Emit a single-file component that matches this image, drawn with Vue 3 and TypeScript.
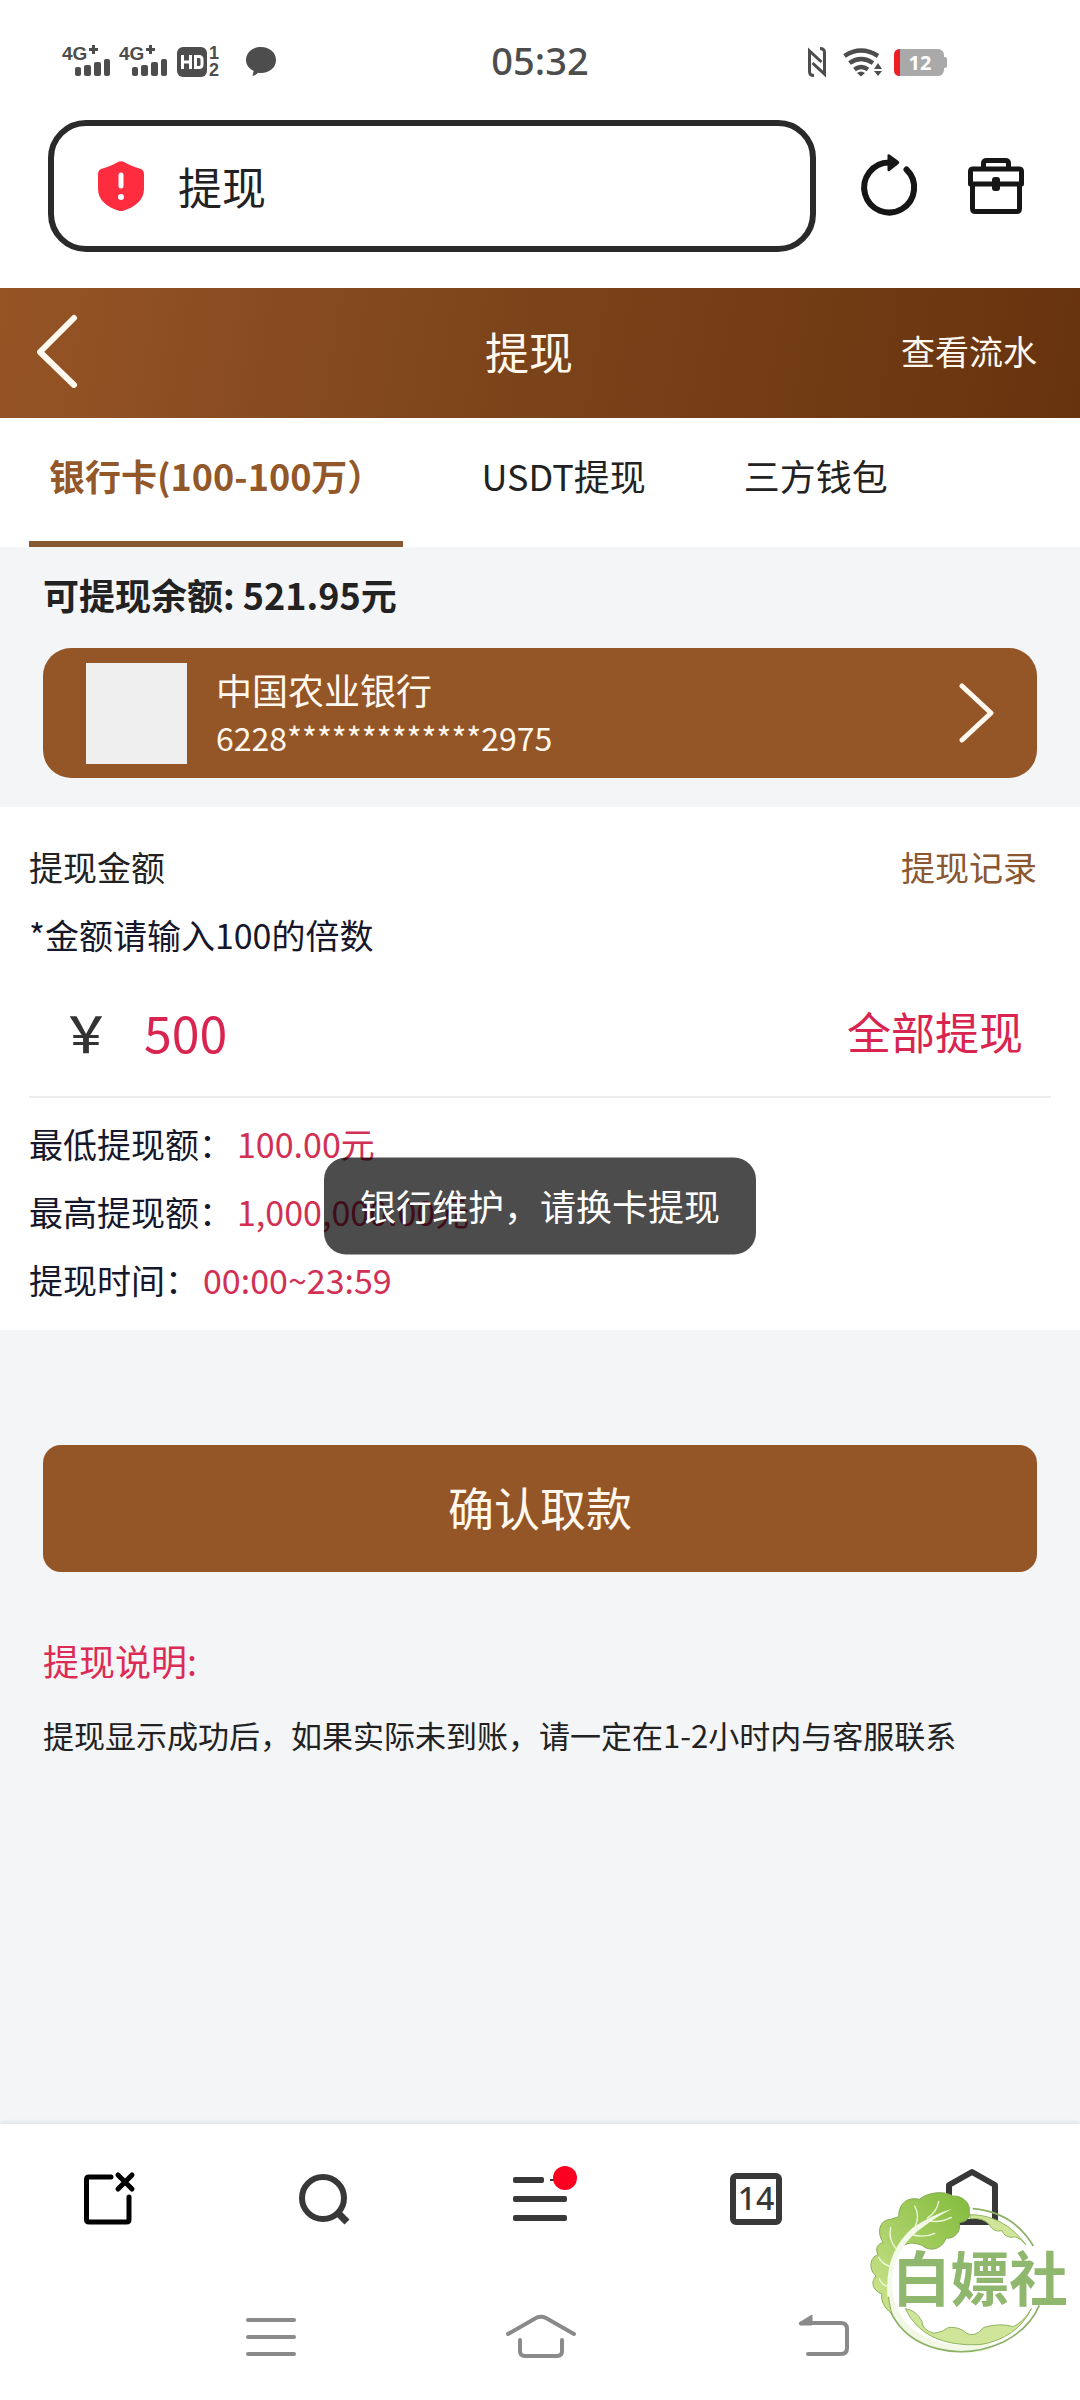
<script setup lang="ts">
import { ref } from 'vue'

interface Tab {
  id: string
  label: string
}

interface Limit {
  label: string
  value: string
}

const tabs: Tab[] = [
  { id: 'bank', label: '银行卡(100-100万）' },
  { id: 'usdt', label: 'USDT提现' },
  { id: 'wallet', label: '三方钱包' },
]

const limits: Limit[] = [
  { label: '最低提现额：', value: '100.00元' },
  { label: '最高提现额：', value: '1,000,000.00元' },
  { label: '提现时间：', value: '00:00~23:59' },
]

const activeTab = ref('bank')
const address = ref('提现')
const amount = ref('500')
const toast = ref('银行维护，请换卡提现')
</script>

<template>
  <div class="phone">
    <header class="status">
      <svg class="status-left" width="220" height="40" viewBox="60 40 220 40" aria-hidden="true">
        <g v-for="dx in [0, 57]" :key="dx" :transform="`translate(${dx} 0)`">
          <text x="62" y="60" class="net">4G</text>
          <path d="M89 49.500h9M93.500 45v9" stroke="#4d4d4d" stroke-width="3" />
          <rect x="75" y="67" width="6" height="9" rx="2" />
          <rect x="84" y="65" width="7" height="11" rx="2" />
          <rect x="94" y="62" width="7" height="14" rx="2" />
          <rect x="104" y="59" width="6" height="17" rx="2" />
        </g>
        <rect x="177" y="47" width="30" height="30" rx="6" />
        <path d="M182.500 55v14M190.500 55v14M182.500 62h8M195.500 56.500h3.500q3 0 3 3v5q0 3-3 3h-3.500z" fill="none" stroke="#fff" stroke-width="3" />
        <text x="209" y="59" class="sim">1</text>
        <text x="209" y="76" class="sim">2</text>
        <path d="M261 47c8.500 0 15 5.500 15 13s-6.500 13-15 13c-1 0-2 0-3-.3-1.500 1.500-3 2.600-4.700 3-.6.100-.9-.4-.6-1l1-3.700c-4.600-2.300-7.700-6.200-7.700-11 0-7.500 6.500-13 15-13z" />
      </svg>
      <time class="clock">05:32</time>
      <svg class="status-right" width="150" height="40" viewBox="800 40 150 40" aria-hidden="true">
        <path d="M814 75.500q-4.500 0-4.500-4V51l12 11M820 48.500q4.500 0 4.500 4V74l-12-11" fill="none" stroke="#4d4d4d" stroke-width="3" />
        <g fill="none" stroke="#4d4d4d" stroke-width="4.500">
          <path d="M844.500 56q16.500-11 33.500 0" />
          <path d="M849.500 63q11.500-8 23.500 0" />
          <path d="M854.500 69.500q6.500-5 13.500 0" />
        </g>
        <path d="M857 73q4-3 8 0l-4 3.500zM878 63l4 6h-8zM878 76l4-5h-8z" />
        <rect x="894" y="49" width="50" height="27" rx="6" fill="#a9a9a9" />
        <path d="M944 57h1q2 0 2 2v7q0 2-2 2h-1z" fill="#a9a9a9" />
        <path d="M900 49v27q-6 0-6-6V55q0-6 6-6z" fill="#ed1f24" />
        <text x="920" y="70" class="battery">12</text>
      </svg>
    </header>

    <form class="browser" @submit.prevent>
      <div class="address">
        <svg width="46" height="50" viewBox="0 0 46 50" aria-hidden="true">
          <path d="M20 1q3-1.500 6 0c5 3 10 5 15.500 6.500 3 1 4.500 2.500 4.500 5.500v15c0 11-9 18-20 21.500q-3 1-6 0C9 46 0 39 0 28V13c0-3 1.500-4.500 4.500-5.500C10 6 15 4 20 1z" fill="#fe2c3f" />
          <path d="M23 14v11" stroke="#fff" stroke-width="5" stroke-linecap="round" />
          <circle cx="23" cy="36" r="3" fill="#fff" />
        </svg>
        <input v-model="address" class="address-input" type="text" aria-label="网址" />
      </div>
      <button class="icon" type="button" aria-label="刷新">
        <svg class="spill" width="56" height="62" viewBox="0 0 56 62">
          <path d="M46.500 14.500A25 25 0 1 1 29 7.500" fill="none" stroke="#161616" stroke-width="6" stroke-linecap="round" />
          <path d="M27.500 0.500q0-2 2-1l9 6.500q1.500 1.500 0 3l-9 7q-2 1-2-1z" fill="#161616" />
        </svg>
      </button>
      <button class="icon" type="button" aria-label="工具箱">
        <svg width="56" height="58" viewBox="0 0 56 58">
          <g fill="none" stroke="#161616" stroke-width="5" stroke-linejoin="round">
            <path d="M15.500 12V6.500q0-3 3-3h19q3 0 3 3V12" />
            <path d="M2.500 27V14.500q0-2.500 2.500-2.500h46q2.500 0 2.500 2.500V27z" />
            <path d="M4.500 28v23.500q0 3 3 3h41q3 0 3-3V28" />
          </g>
          <rect x="24" y="20" width="8" height="14" rx="3" fill="#161616" />
        </svg>
      </button>
    </form>

    <div class="view">
      <nav class="titlebar">
        <button class="back" type="button" aria-label="返回">
          <svg width="42" height="74" viewBox="0 0 42 74">
            <path d="M37 4L3 38l34 33" fill="none" stroke="#fff8ee" stroke-width="6" stroke-linecap="round" stroke-linejoin="round" />
          </svg>
        </button>
        <h1>提现</h1>
        <a class="flow" href="#flow">查看流水</a>
      </nav>

      <div class="tabs" role="tablist">
        <button
          v-for="tab in tabs"
          :key="tab.id"
          type="button"
          role="tab"
          class="tab"
          :class="{ active: tab.id === activeTab }"
          :aria-selected="tab.id === activeTab"
          @click="activeTab = tab.id"
        >{{ tab.label }}</button>
      </div>

      <section class="account">
        <p class="balance">可提现余额: 521.95元</p>
        <button class="card" type="button">
          <span class="logo"></span>
          <span class="card-text">
            <span class="bank">中国农业银行</span>
            <span class="number">6228*************2975</span>
          </span>
          <svg width="36" height="60" viewBox="0 0 36 60" aria-hidden="true">
            <path d="M4 3l29 27L4 57" fill="none" stroke="#fff8ee" stroke-width="5" stroke-linecap="round" stroke-linejoin="round" />
          </svg>
        </button>
      </section>

      <section class="withdraw">
        <div class="line">
          <label for="amount">提现金额</label>
          <a class="records" href="#records">提现记录</a>
        </div>
        <p class="hint">*金额请输入100的倍数</p>
        <div class="amount">
          <span class="yen">￥</span>
          <input id="amount" v-model="amount" type="text" inputmode="numeric" />
          <button class="all" type="button">全部提现</button>
        </div>
        <dl class="limits">
          <div v-for="item in limits" :key="item.label" class="limit">
            <dt>{{ item.label }}</dt>
            <dd>{{ item.value }}</dd>
          </div>
        </dl>
      </section>

      <section class="confirm">
        <button class="submit" type="button">确认取款</button>
        <h2>提现说明:</h2>
        <p class="note">提现显示成功后，如果实际未到账，请一定在1-2小时内与客服联系</p>
      </section>

      <div v-if="toast" class="toast" role="status">{{ toast }}</div>
    </div>

    <footer class="bottom">
      <div class="toolbar">
        <button class="icon" type="button" aria-label="关闭页面">
          <svg width="60" height="60" viewBox="0 0 60 60">
            <path d="M33 9H11q-2.500 0-2.500 2.500v40q0 2.500 2.500 2.500h37.500q2.500 0 2.500-2.500V29M40 7l14 14M54 7L40 21" fill="none" stroke="#000" stroke-width="5" stroke-linecap="round" />
          </svg>
        </button>
        <button class="icon" type="button" aria-label="搜索">
          <svg width="60" height="60" viewBox="0 0 60 60">
            <circle cx="29" cy="30" r="21" fill="none" stroke="#383838" stroke-width="6" />
            <path d="M43 44l10 10" stroke="#383838" stroke-width="7" />
          </svg>
        </button>
        <button class="icon" type="button" aria-label="菜单">
          <svg class="spill" width="60" height="60" viewBox="0 0 60 60">
            <g fill="#383838">
              <rect x="3" y="9" width="31" height="6" rx="2" />
              <rect x="40" y="11" width="6" height="2" />
              <rect x="3" y="28" width="54" height="6" rx="2" />
              <rect x="3" y="47" width="54" height="6" rx="2" />
            </g>
            <circle cx="55" cy="10" r="12" fill="#fb0021" />
          </svg>
        </button>
        <button class="icon" type="button" aria-label="标签页">
          <svg width="60" height="60" viewBox="0 0 60 60">
            <rect x="7" y="8" width="46" height="46" rx="3" fill="none" stroke="#383838" stroke-width="6" />
            <text x="30" y="42" class="count">14</text>
          </svg>
        </button>
        <button class="icon" type="button" aria-label="主页">
          <svg width="60" height="60" viewBox="0 0 60 60">
            <path d="M30 4L7 17v37h46V17z" fill="none" stroke="#383838" stroke-width="6" stroke-linejoin="round" />
          </svg>
        </button>
      </div>

      <div class="system">
        <button class="icon" type="button" aria-label="最近任务">
          <svg width="80" height="60" viewBox="0 0 80 60">
            <path d="M18 14h46M18 31h46M18 48h46" stroke="#8a8a8a" stroke-width="4" stroke-linecap="round" />
          </svg>
        </button>
        <button class="icon" type="button" aria-label="桌面">
          <svg width="80" height="60" viewBox="0 0 80 60">
            <path d="M8 28l28-16q5-2.500 10 0l28 16M20 34v11q0 5 5 5h32q5 0 5-5V34" fill="none" stroke="#8a8a8a" stroke-width="4" stroke-linecap="round" />
          </svg>
        </button>
        <button class="icon" type="button" aria-label="后退">
          <svg width="80" height="60" viewBox="0 0 80 60">
            <path d="M32 17h39q6 0 6 6v19q0 6-6 6H38" fill="none" stroke="#8a8a8a" stroke-width="4" stroke-linecap="round" />
            <path d="M29 17l13-8v10H30z" fill="#8a8a8a" stroke="#8a8a8a" stroke-width="1" />
          </svg>
        </button>
      </div>

      <svg class="stamp" width="230" height="240" viewBox="0 0 690 720" role="img" aria-label="白嫖社">
        <defs>
          <linearGradient id="leaf" x1="1" y1="0" x2="0" y2="1">
            <stop offset="0" stop-color="#82bb3c" />
            <stop offset="0.550" stop-color="#a9d066" />
            <stop offset="1" stop-color="#d3e893" />
          </linearGradient>
        </defs>
        <path d="M130 320C90 440 120 560 230 606Q320 642 420 618" fill="none" stroke="#f3f8e6" stroke-width="24" />
        <path d="M126 522C100 500 92 480 96 462C66 450 62 425 78 408C56 390 58 352 84 344C74 325 84 310 100 308C80 280 86 240 122 238L146 230C146 190 172 170 208 178C230 158 282 150 308 168C335 166 362 188 358 214C362 236 346 246 328 248C334 276 312 298 288 294C276 330 238 336 216 316C180 302 158 310 138 340C108 390 108 460 126 522z" fill="url(#leaf)" stroke="#86ac55" stroke-width="3" />
        <path d="M112 470C106 380 132 310 190 262Q245 225 306 206Q230 246 184 290C142 334 122 390 122 470z" fill="#f4faea" />
        <g fill="none" stroke="#eff8dc" stroke-width="4" stroke-linecap="round">
          <path d="M196 258Q210 226 194 198M232 234Q262 214 266 184M230 242Q270 250 304 232M180 282Q220 296 254 280M140 328Q114 300 122 262M122 380Q96 372 86 352M114 440Q92 432 88 416" />
        </g>
        <path d="M360 224Q460 224 528 314Q500 284 484 292Q462 290 456 272Q430 278 418 254Q400 232 360 236z" fill="#cfe59a" stroke="#91b65e" stroke-width="3" />
        <path d="M166 506Q198 510 216 544Q214 568 252 580Q280 576 296 562Q330 560 350 580Q374 594 402 562Q450 548 490 560Q520 546 544 506Q500 596 390 614Q220 622 166 506z" fill="#cfe59a" stroke="#91b65e" stroke-width="3" />
        <path d="M368 206Q490 216 550 318M124 520C180 630 330 666 460 606Q538 566 568 496" fill="none" stroke="#8ab165" stroke-width="5" />
        <text x="390" y="484" class="stamp-text">白嫖社</text>
      </svg>
    </footer>
  </div>
</template>

<style>
html,
body {
  margin: 0;
  background: #fff;
}
</style>

<style scoped>
.phone {
  display: flex;
  flex-direction: column;
  min-height: 100vh;
  background: #fff;
  color: #222;
  font-family: "Noto Sans CJK SC", "Noto Sans", sans-serif;
}

button,
input {
  margin: 0;
  padding: 0;
  border: 0;
  border-radius: 0;
  background: none;
  color: inherit;
  font: inherit;
  outline: none;
}

button {
  cursor: pointer;
}

a {
  color: inherit;
  text-decoration: none;
}

h1,
h2,
p,
dl,
dd {
  margin: 0;
  font-weight: 400;
}

svg {
  display: block;
  flex: none;
}

/* status bar */
.status {
  display: grid;
  grid-template-columns: 1fr auto 1fr;
  align-items: center;
  height: 120px;
  fill: #4d4d4d;
}

.status-left {
  margin-left: 60px;
}

.status-right {
  justify-self: end;
  margin-right: 130px;
}

.clock {
  color: #4d4d4d;
  font-family: "Noto Sans", sans-serif;
  font-size: 38px;
  font-weight: 500;
  line-height: 40px;
}

.net {
  font: 700 19px "Liberation Sans", sans-serif;
}

.sim {
  font: 700 18px "Liberation Sans", sans-serif;
}

.battery {
  fill: #fff;
  font: 700 20px "Noto Sans", sans-serif;
  text-anchor: middle;
}

/* browser address row */
.browser {
  display: flex;
  align-items: center;
  gap: 52px;
  padding: 0 56px 36px 48px;
}

.address {
  display: flex;
  flex: 1;
  align-items: center;
  gap: 34px;
  box-sizing: border-box;
  height: 132px;
  min-width: 0;
  margin-right: -8px;
  padding: 0 44px;
  border: 6px solid #2a2a2a;
  border-radius: 38px;
}

.address-input {
  flex: 1;
  min-width: 0;
  height: 64px;
  font-size: 44px;
}

.icon {
  display: flex;
  align-items: center;
  justify-content: center;
}

/* page */
.view {
  position: relative;
  flex: 1;
  background: #f3f5f7;
}

.titlebar {
  display: flex;
  align-items: center;
  justify-content: space-between;
  height: 126px;
  padding: 0 43px 4px 37px;
  background: linear-gradient(100deg, #965425, #7b431a 50%, #67330e);
  color: #fff8ee;
}

.back {
  width: 120px;
}

.titlebar h1 {
  font-size: 44px;
  line-height: 64px;
}

.flow {
  font-size: 34px;
  line-height: 48px;
}

.tabs {
  display: flex;
  gap: 58px;
  padding: 0 29px;
  background: #fff;
}

.tab {
  height: 129px;
  padding: 0 20px 10px;
  border-bottom: 6px solid transparent;
  font-size: 36px;
  line-height: 48px;
  white-space: nowrap;
}

.tab.active {
  border-bottom-color: #875932;
  color: #925829;
  font-weight: 700;
}

.account {
  padding: 0 43px 29px;
}

.balance {
  margin-bottom: 6px;
  font-size: 36px;
  font-weight: 700;
  line-height: 95px;
}

.card {
  display: flex;
  align-items: center;
  gap: 29px;
  width: 100%;
  height: 130px;
  padding: 0 43px;
  border-radius: 28px;
  background: #945527;
  color: #fff8ee;
  text-align: left;
}

.logo {
  width: 101px;
  height: 101px;
  background: #efefef;
}

.card-text {
  display: flex;
  flex: 1;
  flex-direction: column;
  line-height: 48px;
}

.bank {
  font-size: 36px;
}

.number {
  font-size: 32px;
}

.withdraw {
  padding: 26px 29px 16px;
  background: #fff;
  font-size: 34px;
  line-height: 68px;
}

.line {
  display: flex;
  justify-content: space-between;
  padding-right: 14px;
}

.records {
  color: #8a5730;
}

.hint,
.limits {
  color: #17172b;
}

.amount {
  display: flex;
  align-items: center;
  height: 124px;
  padding: 0 28px 3px 32px;
  border-bottom: 2px solid #ededed;
  color: #d92450;
}

.yen {
  width: 83px;
  color: #333;
  font-size: 50px;
  font-weight: 500;
}

.amount input {
  flex: 1;
  min-width: 0;
  height: 72px;
  font-size: 50px;
}

.all {
  font-size: 44px;
}

.limits {
  padding-top: 12px;
}

.limit {
  display: flex;
  gap: 4px;
}

.limit dd {
  color: #d22f54;
}

.confirm {
  padding: 115px 43px 0;
}

.submit {
  width: 100%;
  height: 127px;
  padding-bottom: 6px;
  border-radius: 18px;
  background: #945527;
  color: #fff8ee;
  font-size: 46px;
}

.confirm h2 {
  margin-top: 63px;
  color: #dc2c56;
  font-size: 36px;
  line-height: 50px;
}

.note {
  margin-top: 25px;
  font-size: 31px;
  line-height: 50px;
}

.toast {
  position: absolute;
  top: 50%;
  left: 50%;
  padding: 23px 36px 26px;
  border-radius: 22px;
  background: rgba(0, 0, 0, 0.7);
  color: #fff;
  font-size: 36px;
  line-height: 48px;
  white-space: nowrap;
  transform: translate(-50%, -50%);
}

/* browser toolbar and system keys */
.bottom {
  position: relative;
  background: #fff;
  box-shadow: 0 -2px 4px rgba(0, 0, 0, 0.08);
}

.toolbar {
  display: grid;
  grid-template-columns: repeat(5, 1fr);
  height: 148px;
}

.system {
  display: grid;
  grid-template-columns: repeat(3, 1fr);
  height: 128px;
  padding: 0 12.5%;
}

.spill {
  overflow: visible;
}

.count {
  fill: #383838;
  font: 500 32px "Noto Sans", sans-serif;
  text-anchor: middle;
}

.stamp {
  position: absolute;
  right: 0;
  bottom: 20px;
  pointer-events: none;
}

.stamp-text {
  fill: #8fb76e;
  font: 700 176px "Noto Sans CJK SC", sans-serif;
  text-anchor: middle;
}
</style>
